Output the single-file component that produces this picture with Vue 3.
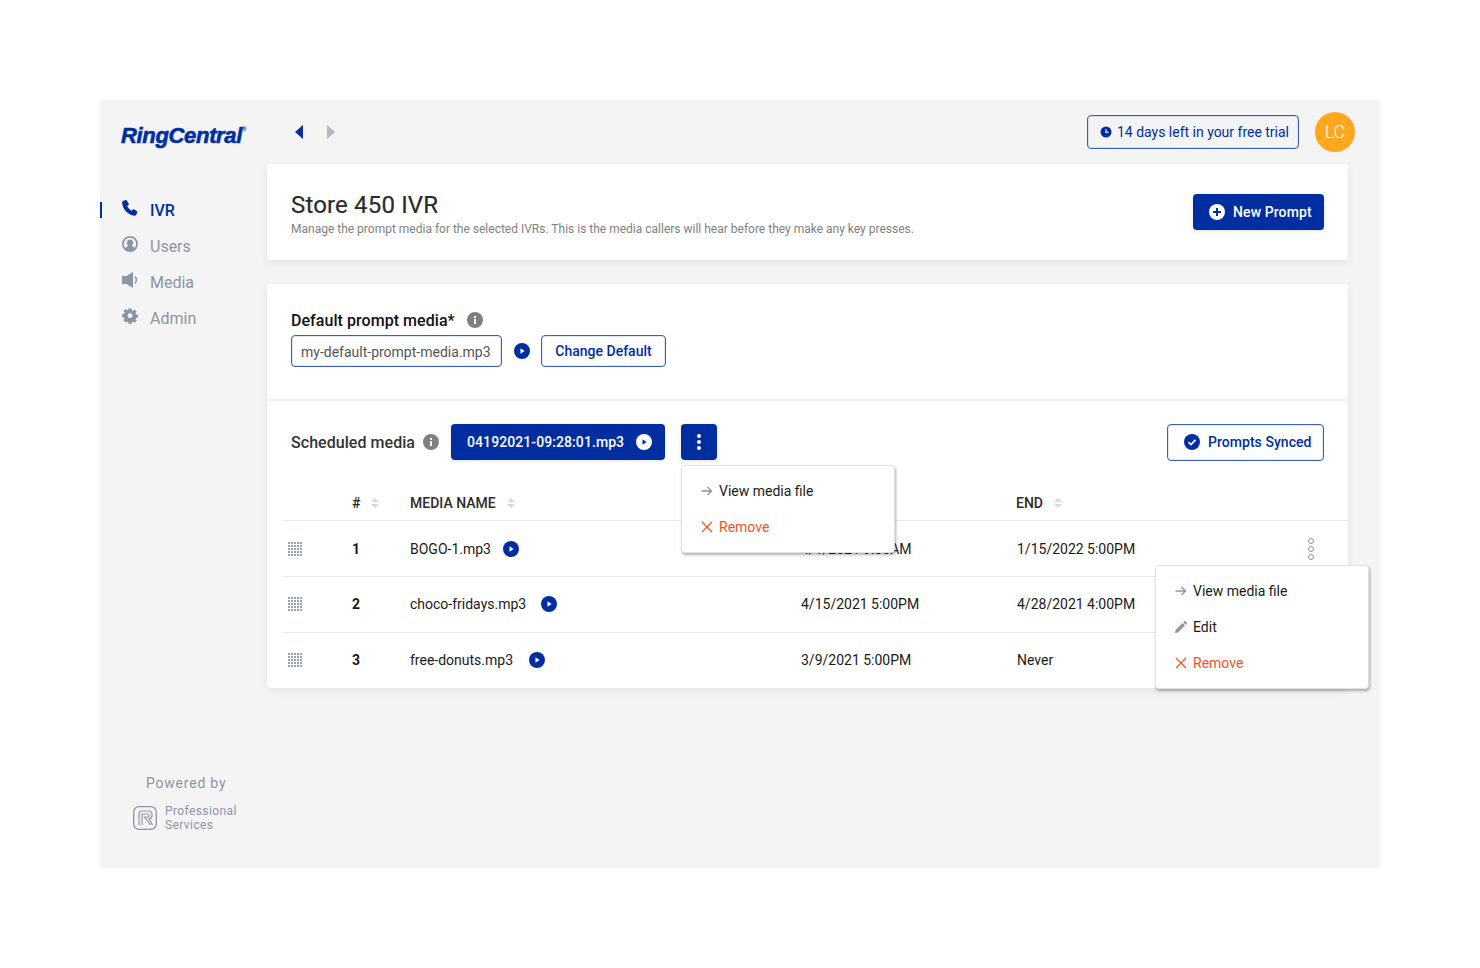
<script setup>
const navItems = [
  { label: 'IVR', icon: 'i-phone', active: true },
  { label: 'Users', icon: 'i-user' },
  { label: 'Media', icon: 'i-speaker' },
  { label: 'Admin', icon: 'i-gear' },
]

const rows = [
  { id: 1, name: 'BOGO-1.mp3', start: '4/1/2021 9:30AM', end: '1/15/2022 5:00PM' },
  { id: 2, name: 'choco-fridays.mp3', start: '4/15/2021 5:00PM', end: '4/28/2021 4:00PM' },
  { id: 3, name: 'free-donuts.mp3', start: '3/9/2021 5:00PM', end: 'Never' },
]
</script>

<template>
  <svg class="defs" aria-hidden="true">
    <symbol id="i-play" viewBox="0 0 16 16">
      <circle cx="8" cy="8" r="8" fill="currentColor" />
      <path d="M6.500 5.300 10.600 8l-4.100 2.700z" fill="var(--glyph, #fff)" />
    </symbol>
    <symbol id="i-info" viewBox="0 0 16 16">
      <circle cx="8" cy="8" r="8" fill="#808080" />
      <rect x="7" y="7" width="2" height="5" fill="#fff" />
      <rect x="7" y="4" width="2" height="2" fill="#fff" />
    </symbol>
    <symbol id="i-phone" viewBox="0 0 16 16">
      <path d="M3.400.1 1.200 1C.4 1.300 0 2 .1 3c.6 6.400 6 12 12.100 12.800 1 .1 1.700-.2 2-1l1-2.400c.2-.5 0-1-.4-1.300l-2.700-1.700c-.4-.3-1-.2-1.300.2l-1 1.200c-2-.9-3.700-2.700-4.600-4.800l1.300-1c.4-.3.500-.9.300-1.300L4.800.6C4.500.2 3.900 0 3.400.1z" fill="currentColor" />
    </symbol>
    <symbol id="i-user" viewBox="0 0 16 16">
      <path fill-rule="evenodd" d="M8 0a8 8 0 1 1 0 16A8 8 0 0 1 8 0zm0 1.800a6.200 6.200 0 0 0-4.700 10.200c.9-1.400 2.300-2 3.100-2.300-1-.6-1.600-1.600-1.600-2.900 0-1.900 1.300-3.200 3.200-3.200s3.200 1.300 3.200 3.200c0 1.300-.6 2.300-1.600 2.900.8.300 2.200.9 3.100 2.300A6.200 6.200 0 0 0 8 1.800z" fill="currentColor" />
    </symbol>
    <symbol id="i-speaker" viewBox="0 0 16 16">
      <path d="M0 4h4.500L11 0v16l-6.500-4H0z" fill="currentColor" />
      <path d="M13 4.600c1.900 1.600 1.900 5.200 0 6.800" fill="none" stroke="currentColor" stroke-width="1.500" />
    </symbol>
    <symbol id="i-gear" viewBox="0 0 16 16">
      <path fill-rule="evenodd" d="M6.500 0h3l.4 2.100 1.300.6L13 1.500l2.100 2.100-1.200 1.800.6 1.300 2.100.4v3l-2.100.4-.6 1.300 1.200 1.800-2.100 2.100-1.800-1.200-1.300.6-.4 2.100h-3l-.4-2.100-1.300-.6L3 15.100.9 13l1.200-1.800-.6-1.300L-.6 9.500v-3l2.100-.4.6-1.300L.9 3l2.100-2.100 1.800 1.200 1.300-.6zM8 5.400a2.600 2.600 0 1 0 0 5.200 2.600 2.600 0 0 0 0-5.200z" fill="currentColor" transform="translate(.6 .2) scale(.93)" />
    </symbol>
    <symbol id="i-arrow" viewBox="0 0 12 10">
      <path d="M.5 5h10M6.500 1l4 4-4 4" fill="none" stroke="currentColor" stroke-width="1.400" />
    </symbol>
    <symbol id="i-x" viewBox="0 0 12 12">
      <path d="M1 1l10 10M11 1 1 11" fill="none" stroke="currentColor" stroke-width="1.200" />
    </symbol>
    <symbol id="i-sort" viewBox="0 0 8 10">
      <path d="M4 0l4 4H0zM4 10 0 6h8z" fill="currentColor" />
    </symbol>
  </svg>

  <div class="page">
    <div class="shell">
      <aside class="side">
        <div class="logo">RingCentral<sup>®</sup></div>
        <nav class="nav">
          <a v-for="item in navItems" :key="item.label" class="nav-item" :class="{ active: item.active }">
            <svg class="nav-icon"><use :href="'#' + item.icon" /></svg>
            <span>{{ item.label }}</span>
          </a>
        </nav>
        <div class="powered">
          <div class="powered-by">Powered by</div>
          <div class="ps">
            <svg class="ps-mark" viewBox="0 0 24 24" fill="none" stroke="currentColor">
              <rect x=".7" y=".7" width="22.600" height="22.600" rx="5.500" stroke-width="1.300" />
              <path d="M6 19V7.500A2.500 2.500 0 0 1 8.500 5h7A3.500 3.500 0 0 1 19 8.500v1a3.500 3.500 0 0 1-3 3.400L19.500 19" stroke-width="1.200" />
              <path d="M9 19V8h6a1 1 0 0 1 1 1v1a1 1 0 0 1-1 1h-3.500l6 8" stroke-width="1.200" />
            </svg>
            <div class="ps-text">Professional<br />Services</div>
          </div>
        </div>
      </aside>

      <main class="main">
        <header class="top">
          <div class="arrows">
            <span class="tri left" />
            <span class="tri right" />
          </div>
          <div class="trial">
            <svg class="trial-icon" viewBox="0 0 12 12">
              <circle cx="6" cy="6" r="5.500" fill="currentColor" />
              <path d="M6 3v3.300h2.500" fill="none" stroke="#f4f4f4" stroke-width="1.200" />
            </svg>
            14 days left in your free trial
          </div>
          <div class="avatar">LC</div>
        </header>

        <section class="card head-card">
          <div>
            <h1>Store 450 IVR</h1>
            <p>Manage the prompt media for the selected IVRs. This is the media callers will hear before they make any key presses.</p>
          </div>
          <button class="btn solid new-prompt">
            <svg class="btn-icon" viewBox="0 0 16 16">
              <circle cx="8" cy="8" r="8" fill="#fff" />
              <path d="M8 4v8M4 8h8" stroke="#002ea1" stroke-width="2" />
            </svg>
            New Prompt
          </button>
        </section>

        <section class="card body-card">
          <div class="default-block">
            <div class="label-row">
              <span class="label">Default prompt media*</span>
              <svg class="info"><use href="#i-info" /></svg>
            </div>
            <div class="default-row">
              <div class="file-box">my-default-prompt-media.mp3</div>
              <svg class="play"><use href="#i-play" /></svg>
              <button class="btn outline change">Change Default</button>
            </div>
          </div>

          <div class="sched-block">
            <span class="label sched">Scheduled media</span>
            <svg class="info"><use href="#i-info" /></svg>
            <button class="btn solid current">
              04192021-09:28:01.mp3
              <svg class="play white"><use href="#i-play" /></svg>
            </button>
            <div class="more-wrap">
              <button class="btn solid more" aria-label="More">
                <i /><i /><i />
              </button>
              <div class="menu menu-a">
                <div class="menu-item"><svg class="mi arrow"><use href="#i-arrow" /></svg>View media file</div>
                <div class="menu-item danger"><svg class="mi"><use href="#i-x" /></svg>Remove</div>
              </div>
            </div>
            <button class="btn outline synced">
              <svg class="btn-icon" viewBox="0 0 16 16">
                <circle cx="8" cy="8" r="8" fill="#002ea1" />
                <path d="M4.500 8.200 7 10.600l4.500-4.800" fill="none" stroke="#fff" stroke-width="1.700" />
              </svg>
              Prompts Synced
            </button>
          </div>

          <div class="table">
            <div class="tr th">
              <span />
              <span class="cell">#<svg class="sort"><use href="#i-sort" /></svg></span>
              <span class="cell">MEDIA NAME<svg class="sort"><use href="#i-sort" /></svg></span>
              <span class="cell">START<svg class="sort"><use href="#i-sort" /></svg></span>
              <span class="cell end-head">END<svg class="sort"><use href="#i-sort" /></svg></span>
              <span />
            </div>
            <div v-for="row in rows" :key="row.id" class="tr td">
              <span class="drag"><i v-for="n in 25" :key="n" /></span>
              <span class="num">{{ row.id }}</span>
              <span class="cell name">
                {{ row.name }}
                <svg class="play"><use href="#i-play" /></svg>
              </span>
              <span>{{ row.start }}</span>
              <span>{{ row.end }}</span>
              <span class="row-more"><i v-if="row.id === 1" /><i v-if="row.id === 1" /><i v-if="row.id === 1" /></span>
            </div>
            <div class="menu menu-b">
              <div class="menu-item"><svg class="mi arrow"><use href="#i-arrow" /></svg>View media file</div>
              <div class="menu-item">
                <svg class="mi arrow" viewBox="0 0 12 12">
                  <path d="M0 12l.6-3L7.500 2.100l2.400 2.400L3 11.400zM8.300 1.300 9.400.2a.7.7 0 0 1 1 0l1.400 1.400a.7.7 0 0 1 0 1l-1.100 1.100z" fill="currentColor" />
                </svg>
                Edit
              </div>
              <div class="menu-item danger"><svg class="mi"><use href="#i-x" /></svg>Remove</div>
            </div>
          </div>
        </section>
      </main>
    </div>
  </div>
</template>

<style>
body { background: #fff; }
</style>

<style scoped>
.defs { position: absolute; width: 0; height: 0; overflow: hidden; }
.page {
  padding: 100px;
  height: 968px;
  box-sizing: border-box;
  font-family: Roboto, "Liberation Sans", sans-serif;
  color: #1a1a1a;
}
.shell {
  display: flex;
  width: 1280px;
  height: 768px;
  background: #f4f4f4;
}

/* sidebar */
.side { width: 167px; flex: none; display: flex; flex-direction: column; }
.logo {
  margin: 22px 0 0 21px;
  height: 28px;
  font: italic 700 22px/28px "Liberation Sans", sans-serif;
  letter-spacing: -.33px;
  color: #002ea1;
  -webkit-text-stroke: .6px #002ea1;
  white-space: nowrap;
}
.logo sup { font-size: 6px; letter-spacing: 0; vertical-align: 12px; line-height: 0; -webkit-text-stroke: 0; }
.nav { margin-top: 42px; display: flex; flex-direction: column; }
.nav-item {
  display: flex;
  align-items: center;
  height: 36px;
  padding-left: 22px;
  color: #8d95a5;
  font-size: 16px;
  position: relative;
}
.nav-icon { width: 16px; height: 16px; margin-right: 12px; position: relative; top: -2px; }
.nav-item.active { color: #002ea1; font-weight: 500; }
.nav-item.active::before {
  content: '';
  position: absolute;
  left: 0;
  top: 10px;
  width: 2px;
  height: 16px;
  background: #002ea1;
}
.powered { margin-top: auto; padding-bottom: 36px; color: #8d95a5; }
.powered-by { margin-left: 46px; font-size: 14px; line-height: 18px; letter-spacing: .78px; }
.ps { display: flex; align-items: center; margin: 12px 0 0 33px; }
.ps-mark { width: 24px; height: 24px; margin-right: 8px; }
.ps-text { font-size: 12px; line-height: 14px; letter-spacing: .4px; }

/* main column */
.main { width: 1081px; flex: none; position: relative; }
.top { height: 64px; display: flex; align-items: center; }
.arrows { display: flex; gap: 24px; margin-left: 28px; }
.tri { width: 0; height: 0; border-top: 7px solid transparent; border-bottom: 7px solid transparent; }
.tri.left { border-right: 8px solid #002ea1; }
.tri.right { border-left: 8px solid #b4b8c0; }
.trial {
  margin-left: auto;
  height: 34px;
  width: 212px;
  box-sizing: border-box;
  display: flex;
  align-items: center;
  padding-left: 12px;
  border: 1px solid #3a5fbd;
  box-shadow: inset 0 0 0 1px rgba(0, 46, 161, .12);
  border-radius: 4px;
  color: #002ea1;
  font-size: 14px;
  letter-spacing: -.01px;
  white-space: nowrap;
}
.trial-icon { width: 12px; height: 12px; margin-right: 5px; }
.avatar {
  margin-left: 16px;
  margin-right: -7px;
  width: 40px;
  height: 40px;
  flex: none;
  border-radius: 50%;
  background: #ffa81f;
  color: #fff;
  font-size: 18px;
  font-weight: 300;
  line-height: 40px;
  text-align: center;
}

.card {
  background: #fff;
  border-radius: 4px;
  box-shadow: 0 3px 8px rgba(0, 0, 0, .07);
}
.head-card {
  height: 96px;
  box-sizing: border-box;
  padding: 0 24px;
  display: flex;
  align-items: center;
  justify-content: space-between;
}
.head-card h1 { margin: 2px 0 0; font-size: 24px; line-height: 30px; font-weight: 400; color: #2b2b2b; letter-spacing: .16px; -webkit-text-stroke: .2px #2b2b2b; }
.head-card p { margin: 1px 0 0; font-size: 12px; line-height: 16px; color: #7f7f7f; }

.btn {
  font-family: inherit;
  font-size: 14px;
  font-weight: 500;
  border-radius: 4px;
  display: flex;
  align-items: center;
  box-sizing: border-box;
  white-space: nowrap;
  padding: 0;
}
.btn.solid { background: #002ea1; color: #fff; border: 0; box-shadow: 0 1px 4px rgba(0, 0, 0, .12); }
.btn.outline { background: #fff; color: #002ea1; border: 1px solid #3a5fbd; box-shadow: inset 0 0 0 1px rgba(0, 46, 161, .12); }
.btn-icon { width: 16px; height: 16px; flex: none; }
.new-prompt { width: 131px; height: 36px; padding-left: 16px; letter-spacing: .1px; }
.new-prompt .btn-icon { margin-right: 8px; }

.body-card { margin-top: 24px; height: 404px; }
.default-block { height: 117px; box-sizing: border-box; padding: 26px 24px 0; border-bottom: 2px solid #f0f0f0; }
.label-row { display: flex; align-items: center; height: 20px; }
.label { font-size: 16px; font-weight: 500; color: #111; letter-spacing: .05px; }
.info { width: 16px; height: 16px; flex: none; }
.label-row .info { margin-left: 12px; }
.default-row { display: flex; align-items: center; margin-top: 5px; }
.file-box {
  width: 211px;
  height: 32px;
  box-sizing: border-box;
  border: 1px solid #3a5fbd;
  box-shadow: inset 0 0 0 1px rgba(0, 46, 161, .12);
  border-radius: 4px;
  padding-left: 9px;
  font-size: 14px;
  line-height: 32px;
  color: #555;
  white-space: nowrap;
}
.play { width: 16px; height: 16px; flex: none; color: #002ea1; }
.play.white { color: #fff; --glyph: #002ea1; }
.default-row .play { margin: 0 11px 0 12px; }
.change { width: 125px; height: 32px; justify-content: center; }

.sched-block { display: flex; align-items: center; padding: 23px 24px 0; height: 36px; }
.sched { color: #333; }
.sched-block .info { margin-left: 8px; }
.current { width: 214px; height: 36px; margin-left: 12px; padding-left: 16px; font-size: 14px; letter-spacing: .08px; }
.current .play { margin-left: 12px; }
.more-wrap { position: relative; margin-left: 16px; }
.more { width: 36px; height: 36px; flex-direction: column; justify-content: center; gap: 2px; }
.more i { width: 4px; height: 4px; border-radius: 50%; background: #fff; }
.synced { margin-left: auto; width: 157px; height: 37px; padding-left: 16px; letter-spacing: .04px; }
.synced .btn-icon { margin-right: 8px; }

.menu {
  position: absolute;
  z-index: 5;
  width: 214px;
  box-sizing: border-box;
  background: #fff;
  border: 1px solid #e2e2e2;
  border-radius: 4px;
  padding: 7px 0;
  box-shadow: 1px 2px 3px rgba(0, 0, 0, .3);
}
.menu-a { left: 0; top: 41px; }
.menu-b { left: 872px; top: 80px; }
.menu-item {
  height: 36px;
  display: flex;
  align-items: center;
  padding-left: 19px;
  font-size: 14px;
  color: #1a1a1a;
}
.menu-item.danger { color: #f4511e; }
.mi { width: 12px; height: 12px; margin-right: 6px; flex: none; }
.mi.arrow { color: #8d95a5; }

.table { position: relative; margin: 25px 0 0 16px; }
.tr {
  display: grid;
  grid-template-columns: 69px 58px 391px 216px 190px 1fr;
  align-items: center;
  border-bottom: 1px solid #e8e8e8;
  font-size: 14px;
}
.tr.th { height: 35px; font-weight: 500; color: #2b2b2b; }
.tr.td { height: 55px; color: #1a1a1a; }
.tr.td:nth-child(n + 3) { height: 54px; padding-bottom: 1px; }
.tr.td:last-of-type { border-bottom: 0; }
.cell { display: flex; align-items: center; }
.end-head { margin-left: -1px; }
.sort { width: 8px; height: 10px; margin-left: 11px; color: #d9d9d9; flex: none; }
.num { font-weight: 700; }
.name .play { margin-left: 12px; }
.tr.td:nth-child(3) .name .play { margin-left: 15px; }
.tr.td:nth-child(4) .name .play { margin-left: 16px; }
.drag {
  display: grid;
  grid-template-columns: repeat(5, 2px);
  gap: 1px;
  margin-left: 5px;
  width: 14px;
}
.drag i { width: 2px; height: 2px; background: #9aa1af; }
.row-more { display: flex; flex-direction: column; gap: 2px; margin-left: 101px; }
.row-more i {
  width: 6px;
  height: 6px;
  box-sizing: border-box;
  border: 1px solid #8d95a5;
  border-radius: 50%;
}
</style>
